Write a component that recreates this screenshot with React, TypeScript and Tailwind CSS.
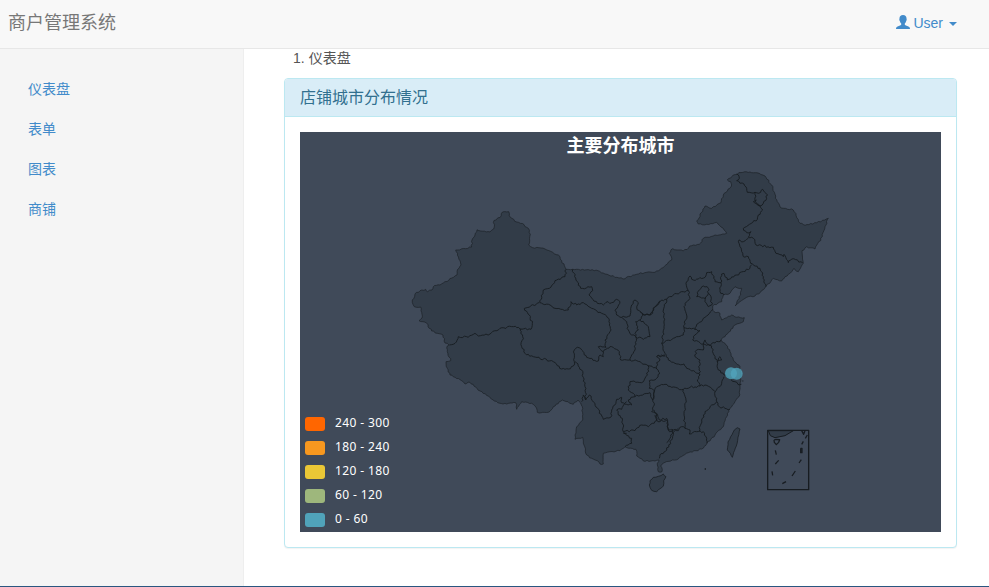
import React from "react";

type Point = [number, number];

const toPoints = (text: string): Point[] =>
  text
    .trim()
    .split(",")
    .map((pair) => pair.trim().split(/\s+/).map(Number) as Point);

// Repeatable noise derived from a position, so that shared borders always meet.
const noise = (x: number, y: number) => {
  const s = Math.sin(x * 12.9898 + y * 78.233) * 43758.5453;
  return (s - Math.floor(s)) * 2 - 1;
};

// Splits every long segment and nudges the new vertices for a natural coastline.
const roughen = (points: Point[], step: number, amount: number) => {
  const out: Point[] = [points[0]];
  for (let i = 1; i < points.length; i++) {
    const [ax, ay] = points[i - 1];
    const [bx, by] = points[i];
    const length = Math.hypot(bx - ax, by - ay);
    const parts = Math.max(1, Math.round(length / step));
    for (let k = 1; k < parts; k++) {
      const t = k / parts;
      const x = ax + (bx - ax) * t;
      const y = ay + (by - ay) * t;
      const n = noise(x, y) * amount;
      out.push([x - ((by - ay) / length) * n, y + ((bx - ax) / length) * n]);
    }
    out.push([bx, by]);
  }
  return "M" + out.map(([x, y]) => `${x.toFixed(1)} ${y.toFixed(1)}`).join("L");
};

const mainland = `412.3 300,415 294,420 290.7,425.7 289.3,427.7 291.7,432 290,434.5 285.5,440 285,457 275,457.5 269.5,461 265,458.5 257,455.7 250,471.7 247,472 240,477 229.8,490 232,493.7 229,494 220.5,500 217.5,502.5 212,508.7 211.7,509.3 215.7,516.7 222,522.5 223.5,528.3 228.3,530.3 234.3,528.7 245,532.7 247.7,545 249,558.3 255,561.7 260.7,566 269.3,572.7 269.3,598 270.7,605 274,623 279,636.7 274.3,646.7 272.3,655 272.3,663 267.7,671.7 260,669.3 253.3,672.7 248.7,683.3 251,691.7 245.7,699.3 244.3,703.3 238.3,715 235,726.7 233.3,723 228,716.7 222.3,706.7 224.3,698.3 224,696.7 221,705 206,711.7 208.3,721 202.7,723.3 195,731.7 185,730.7 181.7,727.3 180,733.3 175,741 172.6,750 172,757 172.8,765 176,771.7 185,777.3 201.7,780 207,793.3 210,800 223.3,805 225.3,816.7 222.7,828.3 218.3,825 226.7,822.3 236.7,815 249,806.7 246.7,802 250.7,803.3 263.3,798.3 271.7,794 268.3,791.7 271.7,785 276.7,781.7 281,773.3 278.3,765 287.7,755 296,746.7 297.3,735 305.7,740.7 295,741.7 288.3,735 286.7,730 293.3,723.3 295,721.7 301.7,712.7 306,712.7 308.3,714 311.7,720 313.3,721.7 320,731.7 315,736.7 317.3,744.3 317.7,743.3 321.7,735 325,725 336.7,721 340,726 345,730 351.7,733.3 360,740 366.7,741 375,740 385,739 396.7,730 408.3,726.7 416.7,723.3 426.7,715 435,706.7 443.3,701.7 449,688.3 452.7,678.3 459,665 462.3,660.7 466,662 471.7,658.3 471.7,657.3 465,659 460,655 461,643 460.7,636.7 456,636 449.3,625 446.7,620 450.7,610 451.7,603.3 453.3,603.3 464,600 464,597.3 460.7,591.7 458.3,586.7 455,584 445,582.7 437.3,575 439.3,576.7 426.7,582.7 420,582.3 406.7,578 400,573.3 404.3,568 401.7,562.3 400,553.3 406.7,548.3 412.3,537.3 412.3,536 407.3,531.7 403.3,521.7 401.7,516.7 409.3,515.7 402.7,506.7 404,497.7 402.7,490 397.7,480 391,470 382.3,465 384,461.7 380.7,450 375,447.3 368.3,446 361.7,450.7 360.7,447.3 351.7,447.3 346,449 345,445 343,443 335,431.7 331,426.7 323.3,419 320.7,422 318,420.7 307,414.3 306.7,412.3 300`;

// Province borders, grouped by survey sheet; each sheet has its own origin and a 3x grid.
const sheets: { origin: Point; lines: string[] }[] = [
  {
    origin: [400, 200],
    lines: [
      "148 435,165 430,175 410,205 412,225 400,235 408,270 402,300 385,340 380,360 387,393 388,397 370,388 345,373 325,418 308",
    ],
  },
  {
    origin: [520, 240],
    lines: [
      "138 88,135 110,105 122,88 145,70 150,60 188",
      "0 270,3 266",
      "0 270,8 290,5 320,15 340,40 350,100 365,125 387,145 387,160 378,163 365,163 330,172 322,185 330,200 352,235 363,240 345,250 350,250 335,235 320,258 322,255 300,273 270,268 240,250 222,215 205,190 188,170 195,153 185,145 210,105 205,90 195,60 188",
      "158 88,168 120,182 145,215 140,218 152,207 165,232 190,250 195,258 187,275 188,290 178,300 185,285 212,290 225,305 232,320 245,325 270,335 285,347 290",
      "305 232,330 228,335 195,345 180,355 188,352 210,368 222,360 240,347 245,355 270,345 280,347 290",
      "360 240,385 260,390 290,370 298,347 290,345 330,335 345,330 360",
      "368 222,392 225,400 205,420 182",
      "250 335,262 325,275 320,298 335,302 360,330 360,360 365,385 378",
    ],
  },
  {
    origin: [560, 350],
    lines: [
      "45 35,65 60,75 110,77 150,88 135,105 160,130 208,152 202,158 175,170 148,185 142,185 158,215 165,205 150,213 142,225 140",
      "77 150,70 135,65 155",
      "265 47,262 75,245 98,210 95,205 120,220 130,225 140,270 128,278 150",
      "265 47,290 57,300 70,290 85,268 92,268 115,283 122,278 150",
      "290 57,290 38,300 30,290 20,315 15",
      "200 155,185 178,170 180,175 195,187 205,190 245,200 250",
      "190 250,215 265,215 280,195 290",
      "190 245,225 242,245 225,265 230,290 212,285 195",
      "283 125,278 150,283 165,275 185,290 190,298 210,320 205,325 240,340 248,355 235",
      "340 248,335 270,320 300,300 315,298 325",
    ],
  },
  {
    origin: [640, 360],
    lines: [
      "43 95,50 80,75 73,95 82,130 88,150 82,180 78,195 75,215 85,225 95",
      "130 88,138 120,132 160,135 205,150 210,148 222,170 215,190 215,200 235,202 250",
      "135 205,125 200,115 212,95 208",
      "42 150,50 165,50 180,60 185,80 180,85 210,98 210,90 235,80 248",
      "178 215,185 180,195 155,215 135,230 125",
      "225 95,230 125,238 140,255 145,270 148",
      "225 95,240 80,245 70,252 50",
      "252 45,285 65,300 75",
    ],
  },
  {
    origin: [640, 260],
    lines: [
      "0 155,10 165,33 163,45 140,65 120,80 118,100 105,130 95,145 92",
      "80 118,70 150,72 200,65 250,75 280,85 300,105 310,132 312,140 325,165 335,180 345,172 360,180 378",
      "65 250,100 235,130 225,132 203",
      "145 92,150 115,132 140,140 165,132 203,165 208,175 190,195 172,218 148",
      "145 92,138 70,150 48,160 60,195 52,200 38,215 35,225 65,243 68,245 42,252 40,262 60,290 45,330 25,335 15",
      "243 68,240 95,252 105",
      "190 78,205 85,205 100,195 115,170 110,172 98,190 78",
      "205 100,213 110,215 135,205 140,195 125,197 112",
      "165 208,180 212,165 225,158 240,180 248,190 252,195 240,205 255,235 245,243 240",
      "190 252,190 270,170 270,165 290,180 300,178 325,180 345",
      "190 252,215 258,222 285,232 305,245 300,240 290,232 305,235 330,252 345",
      "75 288,65 285,50 290",
    ],
  },
  {
    origin: [640, 160],
    lines: [
      "290 42,298 55,290 62,312 72,322 97,345 97,345 120,350 130,360 138",
      "345 97,362 97,368 88,383 105,370 130,360 138,340 125,350 120",
      "360 138,368 150,355 165,352 178,310 205,320 218,333 215,325 232,340 235,348 255,400 262,408 280,430 290,432 283,445 308,455 297,488 308",
      "325 235,310 245,297 240,300 260,310 290,325 290,332 310,360 325,370 350,377 380",
    ],
  },
];

const islets = [
  "402 240,408 238,419 239,416 247,409 254,403 247,402 240",
  "406 271,409 284",
  "416 301,406 312",
  "396 334,398 346",
  "438 365,427 371",
  "466 333,456 348",
  "484 299,477 309",
  "482 265,482 278,486 278,486 265,482 265",
  "490 244,485 253",
  "502 225,496 235",
  "485 212,491 223,495 212",
];

const MAP_FILL = "#323c48";

function ChinaMap() {
  return (
    <svg viewBox="300 132 641 400" className="block h-[400px] w-full">
      <path d={roughen(toPoints(mainland), 2, 0.75)} fill={MAP_FILL} stroke="#1c2228" strokeOpacity=".75" strokeWidth=".95" strokeLinejoin="round" />
      <g fill="none" stroke="#171c21" strokeOpacity=".92" strokeWidth="3" strokeLinejoin="round">
        {sheets.map(({ origin, lines }) => (
          <g key={origin.join()} transform={`translate(${origin[0]} ${origin[1]}) scale(.33333)`}>
            {lines.map((line) => (
              <path key={line} d={roughen(toPoints(line), 5.5, 3)} />
            ))}
          </g>
        ))}
      </g>
      <g transform="translate(640 360) scale(.33333)" stroke="#171c21" strokeWidth="3" strokeLinejoin="round">
        <path d={roughen(toPoints("28 375,30 362,40 352,55 349,70 342,78 350,71 362,70 378,58 387,50 395,35 391,28 375"), 7, 1.5)} fill={MAP_FILL} strokeOpacity=".75" />
        <path d={roughen(toPoints("300 207,292 203,283 210,272 230,264 246,262 270,271 280,277 292,281 277,289 258,294 232,300 207"), 8, 1)} fill={MAP_FILL} strokeOpacity=".75" />
        <path d="M385 212H460L435 227L405 233L391 227Z" fill={MAP_FILL} />
        <path d="M383 211H506V389H383Z" fill="none" strokeWidth="4" />
        {islets.map((line) => (
          <path key={line} d={roughen(toPoints(line), 9, 0)} fill="none" strokeWidth="3.8" />
        ))}
        <path d="M194 325H198V329H194Z" fill="#171c21" stroke="none" />
        <path d="M307 63h3M300 73h4" fill="none" />
      </g>
      <g fill="#50a3ba" fillOpacity=".8">
        <circle cx="731" cy="373.2" r="6" />
        <circle cx="736.7" cy="373.8" r="6" />
      </g>
    </svg>
  );
}

const menu = ["仪表盘", "表单", "图表", "商铺"];

const legend = [
  { label: "240 - 300", color: "bg-[#ff6600]" },
  { label: "180 - 240", color: "bg-[#f7981f]" },
  { label: "120 - 180", color: "bg-[#eac736]" },
  { label: "60 - 120", color: "bg-[#9eb77c]" },
  { label: "0 - 60", color: "bg-[#50a3ba]" },
];

export default function App() {
  return (
    <div className="flex h-[587px] w-full flex-col overflow-hidden border-b border-[#2a5680] bg-white font-['Liberation_Sans','Noto_Sans_CJK_SC',sans-serif] text-sm leading-5 text-[#555]">
      <header className="flex h-[49px] shrink-0 items-start justify-between border-b border-[#e7e7e7] bg-[#f8f8f8] pt-[13px] pr-8 pl-2">
        <a className="text-lg leading-5 text-[#777]">商户管理系统</a>
        <a className="flex items-center text-[#428bca]">
          <svg viewBox="0 0 14 14" className="mt-[-2px] mr-[3px] h-3.5 w-3.5 fill-current">
            <path d="M7 0C4.700 0 3.500 1.300 3.500 3.200C3.500 3.700 3.300 4 3.300 4.700C3.300 5.400 3.800 5.700 3.900 6.200C4.100 7.200 4.500 8 5.200 8.600V9.700C4.800 10.400 2.200 11 1.100 11.700C.4 12.200 0 12.700 0 14H14C14 12.700 13.600 12.200 12.900 11.700C11.800 11 9.200 10.400 8.800 9.700V8.600C9.500 8 9.900 7.200 10.100 6.200C10.200 5.700 10.700 5.400 10.700 4.700C10.700 4 10.500 3.700 10.500 3.200C10.500 1.300 9.300 0 7 0Z" />
          </svg>
          <span>User</span>
          <span className="mt-0.5 ml-1.5 border-x-4 border-t-4 border-x-transparent border-t-current" />
        </a>
      </header>
      <div className="flex min-h-0 flex-1">
        <nav className="flex w-[244px] shrink-0 flex-col border-r border-[#eee] bg-[#f5f5f5] pt-5 pl-[13px]">
          {menu.map((item) => (
            <a key={item} className="h-10 px-[15px] py-2.5 text-[#428bca]">
              {item}
            </a>
          ))}
        </nav>
        <main className="min-w-0 flex-1 pr-8 pl-10">
          <ol className="h-[29px] pl-[9px] leading-[18px]">
            <li className="flex gap-1">
              <span>1.</span>
              <span>仪表盘</span>
            </li>
          </ol>
          <section className="rounded border border-[#bce8f1] bg-white shadow-[0_1px_1px_rgba(0,0,0,.05)]">
            <h3 className="h-[38px] rounded-t-[3px] border-b border-[#bce8f1] bg-[#d9edf7] px-[15px] py-2.5 text-base leading-[18px] text-[#31708f]">
              店铺城市分布情况
            </h3>
            <div className="p-[15px]">
              <div className="relative h-[400px] bg-[#404a59]">
                <ChinaMap />
                <div className="absolute inset-x-0 top-0 text-center text-lg leading-7 font-bold text-white">主要分布城市</div>
                <ul className="absolute bottom-[5px] left-[5px] flex flex-col gap-2.5 font-['Noto_Sans',sans-serif] text-xs tracking-[.4px] text-white">
                  {legend.map(({ label, color }) => (
                    <li key={label} className="flex h-3.5 items-center gap-2.5">
                      <span className={`h-3.5 w-5 rounded-[3px] ${color}`} />
                      <span className="relative -top-px">{label}</span>
                    </li>
                  ))}
                </ul>
              </div>
            </div>
          </section>
        </main>
      </div>
    </div>
  );
}
